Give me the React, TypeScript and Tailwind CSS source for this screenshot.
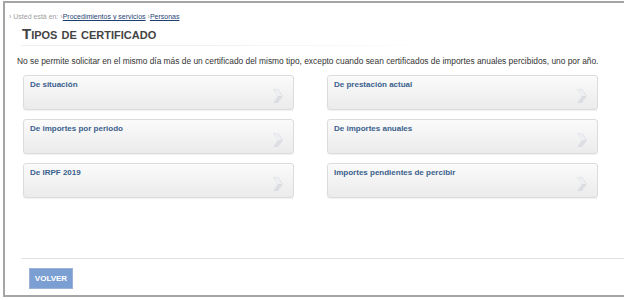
const cards = [
  ["De situación", "De prestación actual"],
  ["De importes por periodo", "De importes anuales"],
  ["De IRPF 2019", "Importes pendientes de percibir"],
];

function Chevron() {
  return (
    <svg width="12" height="16" viewBox="0 0 12 16" className="shrink-0">
      <path d="M1 1 L6 1 L11 8 L6 15 L1 15 L6 8 Z" fill="#dcdee3" />
      <path d="M2 1.5 L5.5 1.5 L10 8 L6 8 Z" fill="#eef0f3" />
    </svg>
  );
}

function Card({ label }: { label: string }) {
  return (
    <button className="flex h-[35px] w-[271px] items-start justify-between rounded-[3px] border border-[#dcdcdc] bg-gradient-to-b from-[#fbfbfb] to-[#ebebeb] pl-[6px] pr-[9px] pt-[3px] text-left shadow-[0_1px_1px_rgba(0,0,0,0.06)]">
      <span className="text-[8px] font-bold leading-[11px] text-[#3a5f8c]">{label}</span>
      <span className="mt-[9px]">
        <Chevron />
      </span>
    </button>
  );
}

export default function App() {
  return (
    <div className="h-[300px] w-[624px] bg-white pl-[3px] pt-[1px] font-['Liberation_Sans',Arial,sans-serif]">
      <div className="flex h-[296px] flex-col border-l-2 border-t-2 border-b-2 border-[#a5a5a5] bg-white">
        <div className="pl-[4px] pt-[9px] text-[7px] leading-[9px] text-[#a0a0a0]">
          › Usted está en: <span>›</span>
          <a className="text-[#1f3f73] underline">Procedimientos y servicios</a>{" "}
          <span>›</span>
          <a className="text-[#1f3f73] underline">Personas</a>
        </div>

        <div className="ml-[16px] mt-[5px] w-[428px] bg-gradient-to-r from-[#eeeeee] via-[#f3f3f3] to-white pb-[1px]">
          <div className="bg-white pb-[3px] pl-[1px] text-[15px] font-bold leading-[16px] text-[#444] [font-variant:small-caps]">
            Tipos de certificado
          </div>
        </div>

        <p className="ml-[12px] mt-[10px] whitespace-nowrap text-[8.4px] leading-[11px] text-[#333]">
          No se permite solicitar en el mismo día más de un certificado del mismo tipo, excepto cuando sean certificados de importes anuales percibidos, uno por año.
        </p>

        <div className="ml-[18px] mt-[8px] flex flex-col gap-[9px]">
          {cards.map((row) => (
            <div key={row[0]} className="flex gap-[33px]">
              {row.map((label) => (
                <Card key={label} label={label} />
              ))}
            </div>
          ))}
        </div>

        <div className="mt-auto ml-[16px] border-t border-[#e2e2e2] pb-[6px] pl-[8px] pt-[5px]">
          <button className="h-[21px] w-[44px] border border-[#9db3d6] bg-[#7c9fd3] text-[8px] font-bold text-white">
            VOLVER
          </button>
        </div>
      </div>
    </div>
  );
}
